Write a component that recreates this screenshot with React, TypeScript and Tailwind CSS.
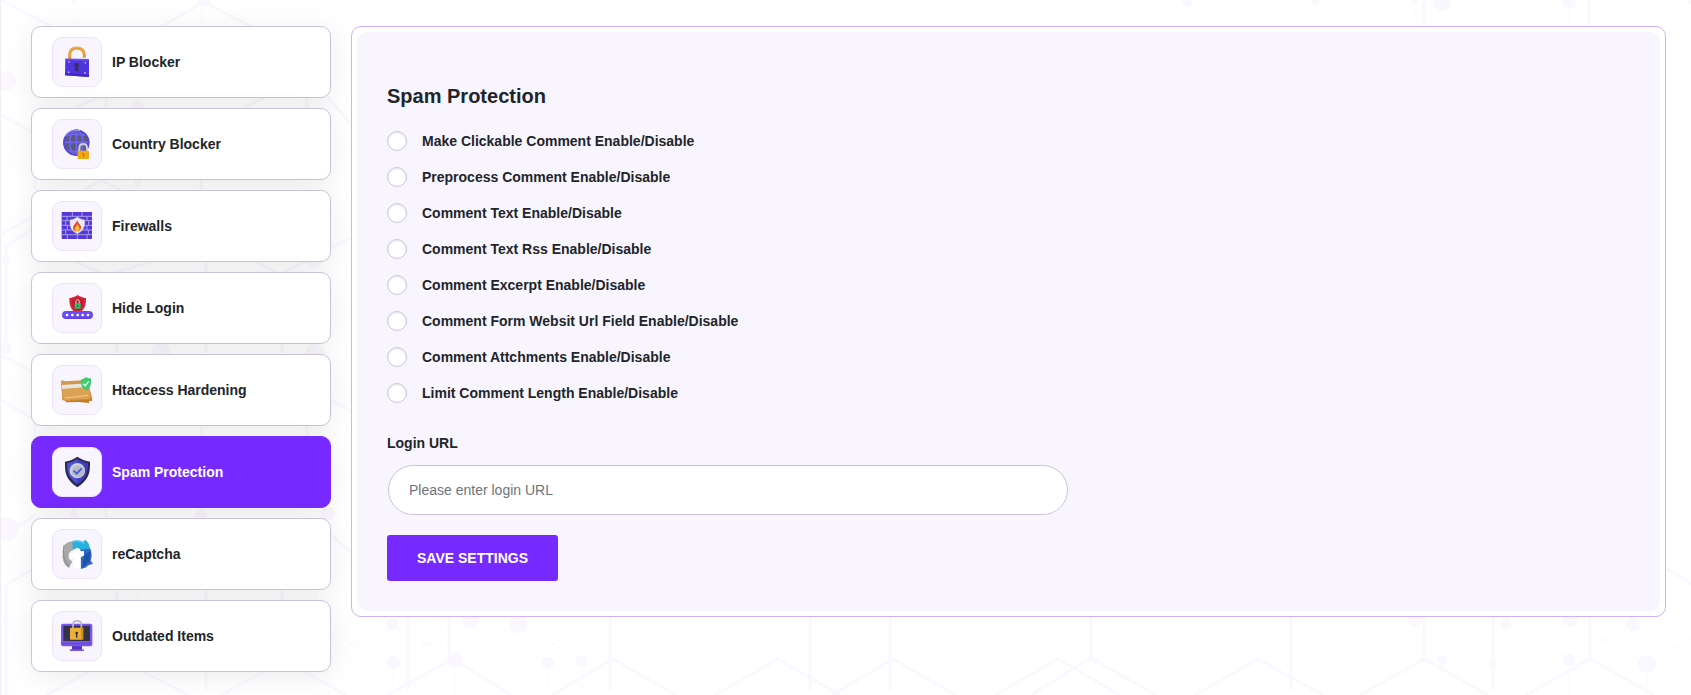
import { ReactNode, useState } from "react";
import { clsx } from "clsx";

function PadlockIcon() {
  return (
    <>
      <path d="M53 66V54c0-14 9-21 22-21s22 9 22 20v9" fill="none" stroke="#e39c33" strokeWidth="9" />
      <path d="M51 62V52c0-13 10-21 23-21s23 8 24 19" fill="none" stroke="#f6bd5c" strokeWidth="2" />
      <path d="M40 65l71 1v54l-72-5z" fill="#4f35dc" />
      <path d="M40 65l71 1v5l-71-1z" fill="#6a50f0" />
      <path d="M39 108l72 5v7l-72-5z" fill="#4227c4" />
      <circle cx="74" cy="85" r="7" fill="#37305e" />
      <path d="M71 88h6l3 15-11-2z" fill="#37305e" />
      <g fill="#a99cf3">
        <circle cx="51" cy="75" r="3" />
        <circle cx="100" cy="77" r="3" />
        <circle cx="50" cy="106" r="3" />
        <circle cx="99" cy="108" r="3" />
      </g>
    </>
  );
}

function GlobeLockIcon() {
  return (
    <>
      <circle cx="73" cy="71" r="39" fill="#575b80" />
      <g fill="none" stroke="#7264ee" strokeWidth="5">
        <path d="M73 33v76M36 70h75M43 50c20-6 40-6 61 0M42 93c20 6 42 6 62 0" />
        <ellipse cx="73" cy="71" rx="20" ry="37" />
        <circle cx="73" cy="71" r="37" stroke="#5546dc" />
      </g>
      <path d="M40 52c10-15 27-20 44-17" fill="none" stroke="#a79df9" strokeWidth="3" />
      <path d="M82 98V88c0-17 23-17 23 0v10" fill="none" stroke="#d3d0dd" strokeWidth="6" />
      <rect x="77" y="95" width="34" height="25" rx="2" fill="#f0a90f" />
      <path d="M90 104h5v10" fill="none" stroke="#d4651a" strokeWidth="3" />
    </>
  );
}

function FirewallIcon() {
  return (
    <>
      <rect x="29" y="33" width="91" height="81" rx="2" fill="#5339d6" />
      <g stroke="#a99cf0" strokeWidth="3">
        <path d="M29 46h91M29 59h91M29 73h91M29 87h91M29 101h91" />
        <path d="M61 33v13M90 33v13M45 46v13M75 46v13M105 46v13M41 59v14M110 59v14M46 73v14M105 73v14M41 87v14M109 87v14M46 101v13M76 101v13M105 101v13" />
      </g>
      <path d="M76 48c7 6 15 8 22 9 1 21-4 33-22 41-18-8-23-20-22-41 8-1 15-3 22-9z" fill="#eeeaf5" stroke="#c9c2da" strokeWidth="2" />
      <path d="M76 57c0 9 11 13 11 22 0 8-5 12-12 12s-12-4-12-11 7-9 13-23z" fill="#e8452c" />
      <path d="M77 69c1 6 6 8 6 13 0 5-3 8-7 8s-8-3-8-7 6-7 9-14z" fill="#ffc02e" />
    </>
  );
}

function HideLoginIcon() {
  return (
    <>
      <path d="M77 36c8 6 17 8 25 9 0 24-4 37-25 47-21-10-25-23-25-47 8-1 17-3 25-9z" fill="#d52536" />
      <path d="M77 43c6 4 12 5 18 6 0 18-3 27-18 36-15-9-18-18-18-36 6-1 12-2 18-6z" fill="#bd2034" />
      <path d="M72 64v-8c0-8 10-8 10 0v8" fill="none" stroke="#e5dfdf" strokeWidth="3" />
      <rect x="68" y="61" width="18" height="16" rx="2" fill="#34bd67" />
      <path d="M77 66v6" stroke="#136b39" strokeWidth="3" />
      <rect x="30" y="84" width="93" height="24" rx="12" fill="#6a4bf2" />
      <path d="M38 104c20 3 60 3 77 0" fill="none" stroke="#5a3bd8" strokeWidth="3" />
      <g fill="#fff">
        <circle cx="45" cy="96" r="4" />
        <circle cx="61" cy="96" r="4" />
        <circle cx="77" cy="96" r="4" />
        <circle cx="92" cy="96" r="4" />
        <circle cx="108" cy="96" r="4" />
      </g>
    </>
  );
}

function FolderShieldIcon() {
  return (
    <>
      <path d="M38 100l76-20 7 27-11 1 2 6-32-3-38 1z" fill="#c07c2b" />
      <path d="M28 57l80-6 13 52-78 6-12-4z" fill="#d18d3c" />
      <path d="M27 46l14 3 64-4 5 55-78 4z" fill="#d39748" />
      <path d="M28 60l80-5v12l-77 5z" fill="#e7e4e1" />
      <path d="M31 73l80-7 4 35-80 4z" fill="#dba253" />
      <path d="M39 99l69-8" stroke="#f1c987" strokeWidth="3" />
      <path d="M102 36c5 4 10 4 15 4 1 18-1 29-13 36-13-5-18-15-18-32 6-1 12-3 16-8z" fill="#3dca71" />
      <path d="M93 56l7 6 10-13" fill="none" stroke="#e9fff0" strokeWidth="4" />
    </>
  );
}

function ShieldCheckIcon() {
  return (
    <>
      <path d="M76 29c12 8 24 12 38 15 1 39-6 54-38 77C44 98 38 83 39 44c14-3 26-7 37-15z" fill="#29284f" />
      <path d="M76 36c11 7 21 10 31 13 0 33-6 44-31 63-25-19-31-30-31-63 11-3 21-6 31-13z" fill="#4c4fd7" />
      <path d="M76 36c11 7 21 10 31 13 0 33-6 44-31 63z" fill="#3f3dba" />
      <circle cx="76" cy="71" r="23" fill="#d0d1d8" />
      <circle cx="78" cy="73" r="18" fill="#b9bbc6" />
      <path d="M65 71l9 9 15-16" fill="none" stroke="#4a62d4" strokeWidth="6" />
    </>
  );
}

function RecaptchaIcon() {
  return (
    <>
      <path d="M32 51l16-11 15-4v28c-9 3-14 9-13 20 0 6 5 10 11 13l-10 20c-12-6-19-21-19-33 0-8 2-16 6-23z" fill="#a7aaa9" />
      <path d="M36 54c-5 21-1 41 14 57" fill="none" stroke="#8d9192" strokeWidth="4" />
      <path d="M62 36c11-3 23-2 32 2l6-6 9 10 6 19-31 4-8-7-14 4z" fill="#27b0df" />
      <path d="M62 37c12-3 25-1 34 6" fill="none" stroke="#65cfef" strokeWidth="4" />
      <path d="M84 62l31-3c5 13 5 26 1 36l7 9-14 5-9 7-14 4V84l8-4z" fill="#2e68c5" />
      <path d="M97 79l18-12-3 30-22 20z" fill="#2051a8" />
      <path d="M68 62c4-6 15-6 17 1v4l11-1v14l-10 3v36l-20-2V84l-8 2-1-12 12-5z" fill="#fff" />
    </>
  );
}

function MonitorLockIcon() {
  return (
    <>
      <path d="M60 103h30v14H60z" fill="#5835bf" />
      <rect x="53" y="115" width="43" height="5" rx="2" fill="#7656df" />
      <rect x="27" y="38" width="94" height="68" rx="6" fill="#7958ea" />
      <rect x="34" y="44" width="80" height="46" rx="2" fill="#343248" />
      <path d="M30 98h88" stroke="#6a49dc" strokeWidth="5" />
      <path d="M63 55V40c0-14 25-14 25 0v15" fill="none" stroke="#bcb8cd" strokeWidth="5" />
      <rect x="54" y="50" width="40" height="36" rx="2" fill="#eab037" />
      <path d="M87 51h6v33h-6z" fill="#d48c1d" />
      <circle cx="74" cy="66" r="4" fill="#353047" />
      <path d="M74 68v12" stroke="#353047" strokeWidth="4" />
    </>
  );
}

const menuItems: { name: string; icon: ReactNode }[] = [
  { name: "IP Blocker", icon: <PadlockIcon /> },
  { name: "Country Blocker", icon: <GlobeLockIcon /> },
  { name: "Firewalls", icon: <FirewallIcon /> },
  { name: "Hide Login", icon: <HideLoginIcon /> },
  { name: "Htaccess Hardening", icon: <FolderShieldIcon /> },
  { name: "Spam Protection", icon: <ShieldCheckIcon /> },
  { name: "reCaptcha", icon: <RecaptchaIcon /> },
  { name: "Outdated Items", icon: <MonitorLockIcon /> },
];

const options = [
  "Make Clickable Comment Enable/Disable",
  "Preprocess Comment Enable/Disable",
  "Comment Text Enable/Disable",
  "Comment Text Rss Enable/Disable",
  "Comment Excerpt Enable/Disable",
  "Comment Form Websit Url Field Enable/Disable",
  "Comment Attchments Enable/Disable",
  "Limit Comment Length Enable/Disable",
];

// x, y, radius of the dots in the page pattern
const dots = [
  [73, 0, 3], [203, 0, 7], [5, 81, 10], [137, 107, 6], [137, 183, 4], [5, 260, 4], [313, 260, 8],
  [5, 348, 6], [160, 352, 9], [314, 352, 9], [73, 513, 4], [200, 515, 6], [327, 513, 7], [5, 529, 12],
  [5, 619, 3], [391, 624, 6], [469, 620, 8], [517, 624, 9], [392, 663, 7], [454, 660, 8], [547, 663, 6],
  [581, 661, 6], [1414, 620, 7], [1505, 624, 5], [1569, 620, 7], [1632, 624, 7], [1441, 660, 5],
  [1568, 660, 6], [1646, 664, 9], [1491, 664, 4], [1186, 2, 5], [1314, 1, 4], [1413, 0, 4], [1441, 2, 9],
  [1568, 2, 7], [1690, 1, 3],
];

function Pattern() {
  return (
    <svg className="absolute inset-0 -z-10 h-full w-full" aria-hidden="true">
      <g fill="none" stroke="#faf8ff" strokeWidth="3">
        <path d="M0 0l50 26M160 27l43-25 48 25M0 115l34 19v56M73 108l32-14v14M240 110l66-36 45 51M306 98v10M83 190l17-10 20 10M200 180v10" />
        <path d="M0 235l34-20M5 347V246l29-18M75 262l30 13 45-13M205 262v10M255 262l25 12 71-37M116 343v10M205 343v10M281 343v10" />
        <path d="M0 355l34 18M0 400l34 20v17M200 425v10M306 425v10M330 400l21 12M105 508v10M12 529l22-14M330 535l21 18" />
        <path d="M5 695V585l29-17M116 590v10M205 590v100M281 590v10M45 695l50-27M138 670l50 25M220 695l50-27M300 670l45 25" />
        <path d="M407 617v73M609 617v73M809 617v73M889 617v73M1290 617v73M1492 617v73M448 617v43M1090 617v43M1423 617v42M1589 617v42" />
        <path d="M386 695l66-36 58 36M551 695l61-36 63 36M714 695l63-36 62 36M831 695l61-36 63 36M994 695l63-36 62 36M1030 695l60-37 65 37" />
        <path d="M1194 695l63-36 65 36M1359 695l64-36 64 36M1525 695l64-36 64 36M1666 569l25 15M1423 0v26M1588 0v26" />
      </g>
      <g fill="none" stroke="#fbfaff">
        <path d="M73 0v26M200 0v26M5 81l29 15M237 425v10M34 435l70-30M136 590v10M159 262v10M159 590v10M263 590v10M314 590v10" />
        <path d="M82 672v20M237 672v20M327 672v23M325 660l45-28M325 630l60 30M391 624l63 36 63-36 64 37v34M392 695v-32l77-43 78 43v26M454 660v35" />
        <path d="M1414 620l77 44 78-44 77 44 45-26M1441 695v-35l64-36 63 36 64-36 59 33M1568 660v35M1646 664v26M1186 2v24M1314 1v25M1413 0v26M1441 2v24M1568 2v24" />
      </g>
      <g fill="#faf7ff">
        {dots.map(([x, y, r]) => (
          <circle key={`${x}-${y}`} cx={x} cy={y} r={r} />
        ))}
      </g>
    </svg>
  );
}

export default function App() {
  const [active, setActive] = useState("Spam Protection");

  return (
    <div className="relative isolate flex min-h-screen items-start gap-5 overflow-hidden border-l border-[#f0eef3] bg-white pt-[26px] pr-[25px] pb-5 pl-[30px] font-['Liberation_Sans',Arial,sans-serif] text-sm leading-5 text-[#212529]">
      <Pattern />
      <nav className="flex w-[300px] shrink-0 flex-col gap-2.5">
        {menuItems.map((item) => (
          <button
            key={item.name}
            type="button"
            onClick={() => setActive(item.name)}
            className={clsx(
              "flex h-[72px] items-center gap-2.5 rounded-[10px] border px-5 text-left font-bold shadow-[0_4px_28px_rgba(0,0,0,0.08)]",
              active === item.name
                ? "border-[#762aff] bg-[#762aff] text-white"
                : "border-[#cbc3dc] bg-white"
            )}
          >
            <span className="flex size-[50px] items-center justify-center rounded-[10px] border border-[#ede3ff] bg-[#f8f5ff]">
              <svg viewBox="3 3 144 144" className="size-12" aria-hidden="true">
                {item.icon}
              </svg>
            </span>
            {item.name}
          </button>
        ))}
      </nav>

      <main className="min-w-0 flex-1 rounded-[10px] border border-[#cdb0ff] bg-white p-[5px]">
        <form
          className="rounded-[10px] bg-[#f8f5ff] px-[30px] pt-[52px] pb-[30px]"
          onSubmit={(e) => e.preventDefault()}
        >
          <h1 className="text-xl leading-6 font-bold">Spam Protection</h1>
          <div className="mt-[23px] flex flex-col items-start gap-4">
            {options.map((option) => (
              <label key={option} className="flex items-center gap-[15px] font-bold">
                <input
                  type="checkbox"
                  className="size-5 appearance-none rounded-full border border-[#cbc3dc] bg-white shadow-[inset_0_1px_2px_rgba(0,0,0,0.1)] checked:bg-[#762aff]"
                />
                {option}
              </label>
            ))}
          </div>
          <label htmlFor="login-url" className="mt-[30px] block font-bold">
            Login URL
          </label>
          <input
            id="login-url"
            type="text"
            placeholder="Please enter login URL"
            className="mt-3 ml-px block h-[50px] w-full max-w-[680px] rounded-full border border-[#cbc3dc] bg-white px-5 placeholder:text-[#6c757d]"
          />
          <button
            type="submit"
            className="mt-5 block h-[46px] rounded-[3px] bg-[#762aff] px-[30px] font-bold text-white uppercase"
          >
            Save Settings
          </button>
        </form>
      </main>
    </div>
  );
}
